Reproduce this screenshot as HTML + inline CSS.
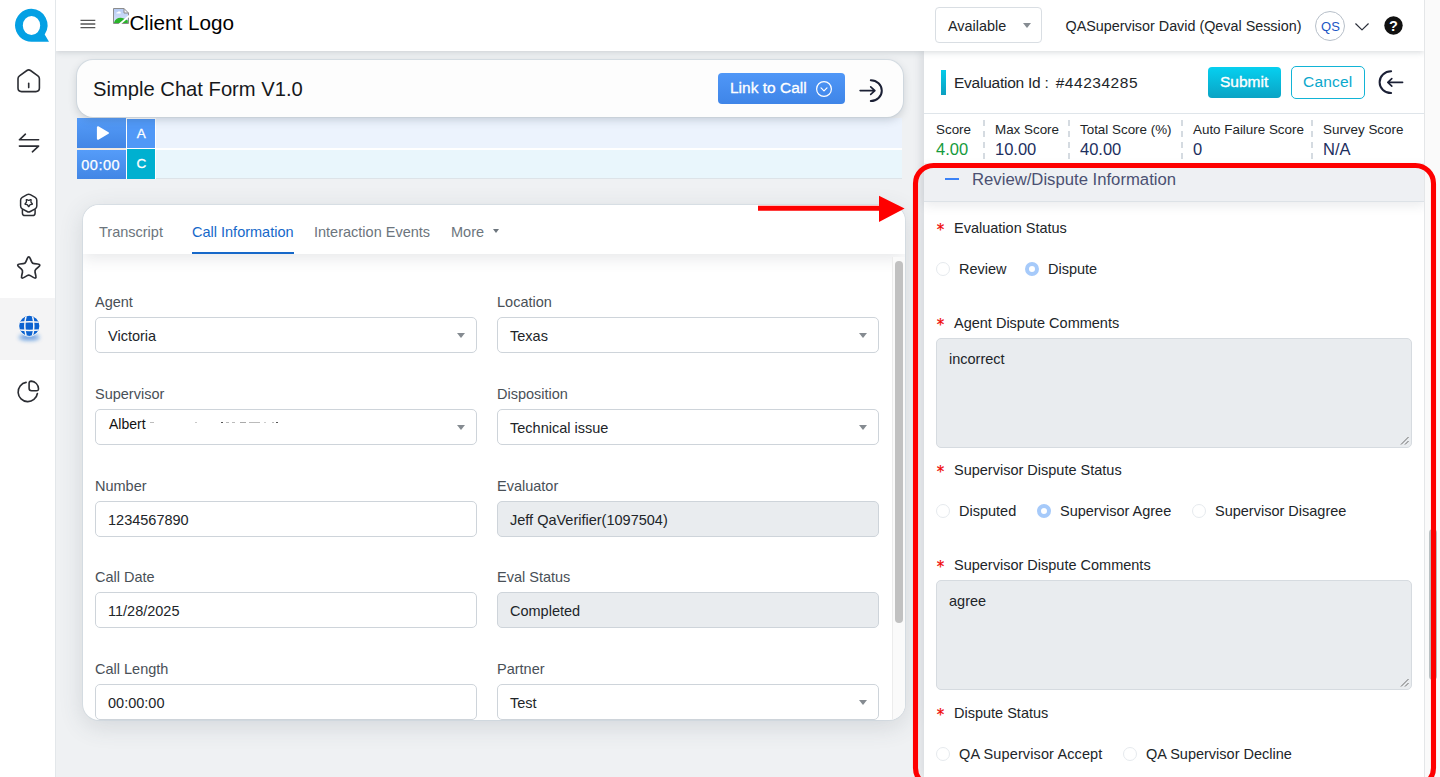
<!DOCTYPE html>
<html lang="en">
<head>
<meta charset="utf-8">
<title>Evaluation</title>
<style>
*{box-sizing:border-box;margin:0;padding:0}
html,body{width:1440px;height:777px;overflow:hidden}
body{position:relative;background:#eff1f3;font-family:"Liberation Sans",Arial,sans-serif;color:#212529;font-size:14.5px}
.abs{position:absolute}
.t{position:absolute;white-space:nowrap;line-height:1}
/* sidebar */
#side{position:absolute;left:0;top:0;width:56px;height:777px;background:#fff;border-right:1px solid #e3e7ea;z-index:5}
#side .act{position:absolute;left:0;top:298px;width:55px;height:62px;background:#f4f4f5}
#side svg{position:absolute}
/* header */
#hdr{position:absolute;left:56px;top:0;width:1368px;height:51px;background:#fff;box-shadow:0 1px 6px rgba(60,72,88,.22);z-index:3}
#gutter{position:absolute;left:1424px;top:0;width:16px;height:777px;background:#fafafa;border-left:1px solid #e4e6e8;z-index:4}
/* left */
#title{position:absolute;left:77px;top:60px;width:826px;height:57px;background:#fdfdfd;border-radius:16px;box-shadow:0 0 0 1px rgba(190,204,216,.45),0 3px 8px rgba(60,72,88,.22)}
#card{position:absolute;left:83px;top:205px;width:822px;height:515px;background:#fff;border-radius:16px;box-shadow:0 0 0 1px rgba(190,204,216,.35),0 6px 24px rgba(60,72,88,.16);overflow:hidden}
.lab{position:absolute;white-space:nowrap;line-height:1;color:#495057;font-size:14.5px}
.inp{position:absolute;width:382px;height:36px;border:1px solid #ced4da;border-radius:5px;background:#fff;font-size:14.5px;line-height:36px;padding-left:12px;color:#212529;white-space:nowrap}
.inp.dis{background:#e9ecef}
.inp.sel:after{content:"";position:absolute;right:11px;top:15px;border-left:4px solid transparent;border-right:4px solid transparent;border-top:5px solid #858b91}
/* right */
#right{position:absolute;left:924px;top:51px;width:500px;height:726px;background:#fff;box-shadow:-3px 0 8px rgba(60,72,88,.13)}
.req{position:absolute;white-space:nowrap;line-height:1;font-size:14.5px;color:#212529}
.req b{position:absolute;left:-18px;top:-1px;color:#e8141c;font-weight:700;font-size:15px}
.rad{position:absolute;width:14px;height:14px;border-radius:50%;border:1px solid #e6eaee;background:#fff}
.rad.on{width:14px;height:14px;border:4px solid #a6cafa;background:#fff}
.rl{position:absolute;white-space:nowrap;line-height:1;font-size:14.5px;color:#212529}
.ta{position:absolute;left:936px;width:476px;height:110px;background:#e9ecef;border:1px solid #d6dbe0;border-radius:5px;font-size:14.5px;padding:13px 12px;line-height:1}
.ta svg{position:absolute;right:2px;bottom:2px}
</style>
</head>
<body>
<!-- SIDEBAR -->
<div id="side">
  <div class="act"></div>
  <svg style="left:0;top:0" width="56" height="420" viewBox="0 0 56 420" fill="none">
    <!-- logo -->
    <path fill="#04a0e4" fill-rule="evenodd" d="M31.5 8.8a16.5 16.5 0 1 0 0 33H49l-4.3-7.3A16.5 16.5 0 0 0 31.5 8.8zM31.5 16a8.7 9.5 0 1 1 0 19a8.7 9.5 0 1 1 0-19z"/>
    <g stroke="#2b2d33" stroke-width="1.600" stroke-linecap="round" stroke-linejoin="round">
      <!-- home -->
      <path d="M26.900 70.500L19.500 75.800Q18 76.900 18 78.800V88Q18 91.600 21.600 91.600H35.800Q39.400 91.600 39.400 88V78.800Q39.400 76.900 37.900 75.800L30.500 70.500Q28.700 69.200 26.900 70.500Z"/>
      <path d="M28.7 83.4v4.2"/>
      <!-- transfer -->
      <path d="M25.4 134.2L19.4 139.8H38.6"/>
      <path d="M32.4 151.8L38.6 146.1H19.4"/>
      <!-- award -->
      <path stroke-width="1.500" d="M27.08 194.60Q28.70 193.70 30.32 194.60L35.18 197.30Q36.80 198.20 36.80 200.14L36.80 205.96Q36.80 207.90 35.18 208.80L30.32 211.50Q28.70 212.40 27.08 211.50L22.22 208.80Q20.60 207.90 20.60 205.96L20.60 200.14Q20.60 198.20 22.22 197.30Z"/>
      <path stroke-width="1.500" d="M22.400 209.700V213Q22.400 215.600 25 215.600H32.500Q35.100 215.600 35.100 213V209.700"/>
      <path stroke-width="1.300" d="M29.04 206.42Q28.70 207.00 28.36 206.42L27.48 204.89Q27.35 204.66 27.08 204.60L25.37 204.24Q24.71 204.10 25.16 203.60L26.33 202.29Q26.51 202.09 26.48 201.82L26.30 200.07Q26.23 199.40 26.85 199.68L28.45 200.39Q28.70 200.50 28.95 200.39L30.55 199.68Q31.17 199.40 31.10 200.07L30.92 201.82Q30.89 202.09 31.07 202.29L32.24 203.60Q32.69 204.10 32.03 204.24L30.32 204.60Q30.05 204.66 29.92 204.89Z"/>
      <!-- star -->
      <path stroke-width="1.700" d="M27.22 258.62Q28.75 255.10 30.28 258.62L31.67 261.81Q32.39 263.48 34.21 263.66L37.67 263.99Q41.49 264.36 38.62 266.90L36.02 269.20Q34.65 270.42 35.04 272.20L35.79 275.59Q36.63 279.34 33.32 277.39L30.33 275.63Q28.75 274.70 27.17 275.63L24.18 277.39Q20.87 279.34 21.71 275.59L22.46 272.20Q22.85 270.42 21.48 269.20L18.88 266.90Q16.01 264.36 19.83 263.99L23.29 263.66Q25.11 263.48 25.83 261.81Z"/>
      <!-- pie -->
      <path d="M26.100 382.400A9.700 9.700 0 1 0 37.400 393.500"/>
      <path d="M29.100 383.300Q29.100 381.100 31.300 381.100A8.200 8.200 0 0 1 38.500 388.600Q38.600 390.800 36.400 390.800H31.600Q29.100 390.800 29.100 388.300Z"/>
    </g>
    <!-- globe -->
    <defs><filter id="bl" x="-50%" y="-300%" width="200%" height="700%"><feGaussianBlur stdDeviation="2"/></filter>
    <clipPath id="gc"><circle cx="29.300" cy="325.900" r="10.100"/></clipPath></defs>
    <ellipse cx="29.200" cy="337.300" rx="10.500" ry="3" fill="#0d63d0" opacity=".6" filter="url(#bl)"/>
    <circle cx="29.300" cy="325.900" r="10.700" fill="#fbfbfb"/>
    <circle cx="29.300" cy="325.900" r="10.100" fill="#0c62d0"/>
    <g clip-path="url(#gc)" stroke="#f6f6f7" stroke-width="1.500" fill="none">
      <path d="M18 322.300Q29.300 321.300 41 322.300M18 329.900Q29.300 330.900 41 329.900"/>
      <ellipse cx="29.300" cy="325.900" rx="4.500" ry="14"/>
    </g>
  </svg>
</div>
<!-- HEADER -->
<div id="hdr">
  <!-- hamburger -->
  <svg class="abs" style="left:24px;top:19px" width="16" height="11" viewBox="0 0 16 11"><path d="M.5 1.300h14.800M.5 5h14.800M.5 8.600h14.800" stroke="#555" stroke-width="1.350"/></svg>
  <!-- broken image -->
  <svg class="abs" style="left:57px;top:8px" width="16" height="16" viewBox="0 0 16 16">
    <defs><linearGradient id="sky" x1="0" y1="0" x2="0" y2="1"><stop offset="0" stop-color="#b4caf3"/><stop offset="1" stop-color="#dbe6fa"/></linearGradient></defs>
    <path d="M.500.500H11L15.500 5V15.500H.500z" fill="url(#sky)"/>
    <path d="M3.300 5.600q-.2-1.300 1.200-1.300q.6-1.300 1.900-.7q1.400-.2 1.300 1.200q.7.800-.4.800z" fill="#fff"/>
    <path d="M1 14.800C2.500 9.500 8.500 8 14.800 12.600V15H1z" fill="#2ab32a"/>
    <path d="M11 .500V5h4.500z" fill="#f4f6fb"/>
    <path d="M.500.500H11L15.500 5V15.500H.500zM11 .500V5h4.500" fill="none" stroke="#8c8c8c" stroke-width="1"/>
    <path d="M6.300 16.500L16.500 7.600" stroke="#fff" stroke-width="1.900"/>
  </svg>
  <span class="t" style="left:73.400px;top:13px;font-size:20.700px;color:#000">Client Logo</span>
  <!-- available -->
  <div class="abs" style="left:879px;top:7px;width:107px;height:36px;border:1px solid #d9dee3;border-radius:4px;background:#fff"></div>
  <span class="t" style="left:892px;top:19px;font-size:14.400px;color:#212529">Available</span>
  <div class="abs" style="left:966.500px;top:23px;border-left:4px solid transparent;border-right:4px solid transparent;border-top:5px solid #868c92"></div>
  <span class="t" style="left:1009.500px;top:19px;font-size:14.350px;color:#212529;">QASupervisor David (Qeval Session)</span>
  <div class="abs" style="left:1259px;top:11px;width:30px;height:30px;border-radius:50%;border:1px solid #b7bfc9;background:#fff"></div>
  <span class="t" style="left:1265px;top:20px;font-size:13px;color:#1a56c4;letter-spacing:.2px">QS</span>
  <svg class="abs" style="left:1298px;top:22px" width="16" height="10" viewBox="0 0 16 10"><path d="M1.700 1.800L8 7.900l6.300-6.100" fill="none" stroke="#2a2e39" stroke-width="1.200" stroke-linecap="round" stroke-linejoin="round"/></svg>
  <svg class="abs" style="left:1327.700px;top:16px" width="19" height="19" viewBox="0 0 19 19"><circle cx="9.500" cy="9.500" r="9.200" fill="#111"/><text x="9.500" y="14.700" text-anchor="middle" font-family="Liberation Sans,Arial,sans-serif" font-weight="700" font-size="14.500" fill="#fff">?</text></svg>
</div>
<div id="gutter"></div>
<!-- LEFT -->
<div id="player">
  <div class="abs" style="left:77px;top:118px;width:825px;height:61px;background:#fff"></div>
  <div class="abs" style="left:156px;top:118px;width:746px;height:30px;background:#ecf3fd"></div>
  <div class="abs" style="left:156px;top:150px;width:746px;height:29px;background:#e9f6fc;border-bottom:1px solid #dde3e8"></div>
  <div class="abs" style="left:77px;top:148px;width:49px;height:2px;background:#f2e9de"></div>
  <div class="abs" style="left:77px;top:118px;width:49px;height:30px;background:linear-gradient(#559cf9,#4286e5)"></div>
  <div class="abs" style="left:77px;top:150px;width:49px;height:29px;background:linear-gradient(#559cf9,#4286e5)"></div>
  <div class="abs" style="left:127px;top:119px;width:28px;height:29px;background:#5098f7"></div>
  <div class="abs" style="left:127px;top:149px;width:28px;height:30px;background:#00b0d0"></div>
  <svg class="abs" style="left:96px;top:125px" width="14" height="16" viewBox="0 0 14 16"><path d="M1.900 2.200v11.600L12 8z" fill="#fff" stroke="#fff" stroke-width="2" stroke-linejoin="round"/></svg>
  <span class="t" style="left:81.300px;top:157.500px;font-size:14.500px;letter-spacing:.5px;color:#fff;-webkit-text-stroke:.25px #fff">00:00</span>
  <span class="t" style="left:136.700px;top:126.500px;font-size:13.500px;color:#fff;-webkit-text-stroke:.3px #fff">A</span>
  <span class="t" style="left:136.500px;top:157px;font-size:13.500px;color:#fff;-webkit-text-stroke:.3px #fff">C</span>
</div>
<div id="title">
  <span class="t" style="left:16px;top:19px;font-size:20.200px;color:#16181b">Simple Chat Form V1.0</span>
  <div class="abs" style="left:641px;top:13px;width:127px;height:31px;border-radius:4px;background:linear-gradient(#4f97f7,#3f85e8)"></div>
  <span class="t" style="left:653px;top:19.500px;font-size:15.500px;color:#fff;-webkit-text-stroke:.3px #fff">Link to Call</span>
  <svg class="abs" style="left:738px;top:20px" width="18" height="18" viewBox="0 0 18 18" fill="none" stroke="#fff" stroke-width="1.200" stroke-linecap="round" stroke-linejoin="round"><circle cx="9" cy="9" r="7.400"/><path d="M6 7.800l3 3l3-3"/></svg>
  <svg class="abs" style="left:781px;top:18px" width="26" height="26" viewBox="0 0 26 26" fill="none" stroke="#1b2035" stroke-linecap="round" stroke-linejoin="round"><path stroke-width="1.600" d="M2.100 12.600H16.900M12.700 8.800L16.900 12.600L12.700 16.400"/><path stroke-width="2" d="M12.800 2.200A11 10.450 0 0 1 12.800 23.100"/></svg>
</div>
<div id="card">
  <div class="abs" style="left:0;top:0;width:822px;height:49px;background:#fff;box-shadow:0 4px 16px rgba(60,72,88,.13)"></div>
  <span class="t" style="left:16px;top:20px;font-size:14.500px;color:#6c757d">Transcript</span>
  <span class="t" style="left:109px;top:20px;font-size:14.500px;color:#1668c9">Call Information</span>
  <div class="abs" style="left:109px;top:47px;width:102px;height:2px;background:#1668c9"></div>
  <span class="t" style="left:231px;top:20px;font-size:14.500px;color:#6c757d">Interaction Events</span>
  <span class="t" style="left:368px;top:20px;font-size:14.500px;color:#6c757d">More</span>
  <div class="abs" style="left:409.500px;top:24px;border-left:3.750px solid transparent;border-right:3.750px solid transparent;border-top:4px solid #6c757d"></div>
  <span class="lab" style="left:12px;top:90px">Agent</span>
  <div class="inp sel" style="left:12px;top:112px">Victoria</div>
  <span class="lab" style="left:414px;top:90px">Location</span>
  <div class="inp sel" style="left:414px;top:112px">Texas</div>
  <span class="lab" style="left:12px;top:182px">Supervisor</span>
  <div class="inp sel" style="left:12px;top:204px"><span style="position:absolute;left:13px;top:-4px;font-size:14px;color:#111">Albert</span><i style="position:absolute;left:54px;top:12px;width:4px;height:1px;background:#bdbdbd"></i><i style="position:absolute;left:99px;top:12px;width:2px;height:1px;background:#c8c8c8"></i><i style="position:absolute;left:125px;top:12px;width:2px;height:1px;background:#555"></i><i style="position:absolute;left:130px;top:12px;width:3px;height:1px;background:#bbb"></i><i style="position:absolute;left:136px;top:12px;width:3px;height:1px;background:#bbb"></i><i style="position:absolute;left:144px;top:12px;width:6px;height:1px;background:#aaa"></i><i style="position:absolute;left:153px;top:12px;width:11px;height:1px;background:#bbb"></i><i style="position:absolute;left:168px;top:12px;width:2px;height:1px;background:#ccc"></i><i style="position:absolute;left:176px;top:12px;width:2px;height:1px;background:#bbb"></i><i style="position:absolute;left:180px;top:12px;width:2px;height:1px;background:#555"></i></div>
  <span class="lab" style="left:414px;top:182px">Disposition</span>
  <div class="inp sel" style="left:414px;top:204px">Technical issue</div>
  <span class="lab" style="left:12px;top:274px">Number</span>
  <div class="inp " style="left:12px;top:296px">1234567890</div>
  <span class="lab" style="left:414px;top:274px">Evaluator</span>
  <div class="inp dis" style="left:414px;top:296px">Jeff QaVerifier(1097504)</div>
  <span class="lab" style="left:12px;top:365px">Call Date</span>
  <div class="inp " style="left:12px;top:387px">11/28/2025</div>
  <span class="lab" style="left:414px;top:365px">Eval Status</span>
  <div class="inp dis" style="left:414px;top:387px">Completed</div>
  <span class="lab" style="left:12px;top:457px">Call Length</span>
  <div class="inp " style="left:12px;top:479px">00:00:00</div>
  <span class="lab" style="left:414px;top:457px">Partner</span>
  <div class="inp sel" style="left:414px;top:479px">Test</div>
  <div class="abs" style="left:809px;top:52px;width:14px;height:470px;background:#fafafa;border-left:1px solid #ececec"></div>
  <div class="abs" style="left:812px;top:56px;width:8px;height:362px;border-radius:4px;background:#c1c1c1"></div>
</div>
<!-- RIGHT -->
<div id="right"></div>
<div id="rp">
  <div class="abs" style="left:941px;top:70px;width:5px;height:25px;background:linear-gradient(#05cbe9,#0b9fc0)"></div>
  <span class="t" style="left:954px;top:75.200px;font-size:15.500px;color:#212529;letter-spacing:-.25px">Evaluation Id :</span>
  <span class="t" style="left:1055.700px;top:75.200px;font-size:15.500px;color:#212529;letter-spacing:.53px">#44234285</span>
  <div class="abs" style="left:1208px;top:67px;width:73px;height:31px;border-radius:4px;background:linear-gradient(#06d0f0,#0aa3c4)"></div>
  <span class="t" style="left:1220px;top:73.8px;font-size:15.5px;color:#fff;-webkit-text-stroke:.35px #fff">Submit</span>
  <div class="abs" style="left:1291px;top:66px;width:74px;height:33px;border-radius:5px;border:1px solid #12b4d6;background:#fff"></div>
  <span class="t" style="left:1303px;top:73.5px;font-size:15.5px;color:#0aa8cc;letter-spacing:.2px">Cancel</span>
  <svg class="abs" style="left:1377px;top:70px" width="28" height="28" viewBox="0 0 28 28" fill="none" stroke="#1b2035" stroke-linecap="round" stroke-linejoin="round"><path stroke-width="1.600" d="M25.600 12.400H10.800M14.800 8.600L10.800 12.400L14.800 16.200"/><path stroke-width="2" d="M14.100 1.300A11.500 10.900 0 0 0 14.100 23.100"/></svg>
  <div class="abs" style="left:924px;top:113px;width:501px;height:1px;background:#dfe5ea"></div>
  <span class="t" style="left:936px;top:122.9px;font-size:13.400px;color:#212529;">Score</span>
  <span class="t" style="left:936px;top:141.2px;font-size:16.5px;color:#159a3c;">4.00</span>
  <span class="t" style="left:995px;top:122.9px;font-size:13.400px;color:#212529;">Max Score</span>
  <span class="t" style="left:995px;top:141.2px;font-size:16.5px;color:#1c2f5e;">10.00</span>
  <span class="t" style="left:1080px;top:122.9px;font-size:13.400px;color:#212529;">Total Score (%)</span>
  <span class="t" style="left:1080px;top:141.2px;font-size:16.5px;color:#1c2f5e;">40.00</span>
  <span class="t" style="left:1193px;top:122.9px;font-size:13.400px;color:#212529;">Auto Failure Score</span>
  <span class="t" style="left:1193px;top:141.2px;font-size:16.5px;color:#1c2f5e;">0</span>
  <span class="t" style="left:1323px;top:122.9px;font-size:13.400px;color:#212529;">Survey Score</span>
  <span class="t" style="left:1323px;top:141.2px;font-size:16.5px;color:#1c2f5e;">N/A</span>
  <div class="abs" style="left:983px;top:120px;width:0;height:39px;border-left:2px dashed #d5dbe1"></div>
  <div class="abs" style="left:1068px;top:120px;width:0;height:39px;border-left:2px dashed #d5dbe1"></div>
  <div class="abs" style="left:1181px;top:120px;width:0;height:39px;border-left:2px dashed #d5dbe1"></div>
  <div class="abs" style="left:1311px;top:120px;width:0;height:39px;border-left:2px dashed #d5dbe1"></div>
  <div class="abs" style="left:924px;top:163px;width:501px;height:39px;background:#eef0f3;border-bottom:1px solid #dde2e7;box-shadow:0 4px 10px rgba(60,72,88,.10)"></div>
  <div class="abs" style="left:945px;top:178px;width:14px;height:2px;background:#3b82f6"></div>
  <span class="t" style="left:972px;top:172.400px;font-size:16.700px;color:#4b5072;">Review/Dispute Information</span>
  <span class="t" style="left:936.700px;top:223.2px;font-family:'DejaVu Sans',sans-serif;font-size:15px;color:#f00808;-webkit-text-stroke:.25px #f00808">*</span>
  <span class="t" style="left:954px;top:221.2px;font-size:14.5px;color:#212529;">Evaluation Status</span>
  <div class="rad" style="left:936px;top:262px"></div>
  <span class="t" style="left:959px;top:262.2px;font-size:14.5px;color:#212529;">Review</span>
  <div class="rad on" style="left:1025px;top:262px"></div>
  <span class="t" style="left:1048px;top:262.2px;font-size:14.5px;color:#212529;">Dispute</span>
  <span class="t" style="left:936.700px;top:318.2px;font-family:'DejaVu Sans',sans-serif;font-size:15px;color:#f00808;-webkit-text-stroke:.25px #f00808">*</span>
  <span class="t" style="left:954px;top:316.2px;font-size:14.5px;color:#212529;">Agent Dispute Comments</span>
  <div class="ta" style="top:338px">incorrect<svg width="9" height="9" viewBox="0 0 9 9"><path d="M8.500 1L1 8.500M8.500 5L5 8.500" stroke="#6a6a6a" stroke-width="1"/></svg></div>
  <span class="t" style="left:936.700px;top:465.2px;font-family:'DejaVu Sans',sans-serif;font-size:15px;color:#f00808;-webkit-text-stroke:.25px #f00808">*</span>
  <span class="t" style="left:954px;top:463.2px;font-size:14.5px;color:#212529;">Supervisor Dispute Status</span>
  <div class="rad" style="left:936px;top:504px"></div>
  <span class="t" style="left:959px;top:504.2px;font-size:14.5px;color:#212529;">Disputed</span>
  <div class="rad on" style="left:1037px;top:504px"></div>
  <span class="t" style="left:1060px;top:504.2px;font-size:14.5px;color:#212529;">Supervisor Agree</span>
  <div class="rad" style="left:1192px;top:504px"></div>
  <span class="t" style="left:1215px;top:504.2px;font-size:14.5px;color:#212529;">Supervisor Disagree</span>
  <span class="t" style="left:936.700px;top:560.2px;font-family:'DejaVu Sans',sans-serif;font-size:15px;color:#f00808;-webkit-text-stroke:.25px #f00808">*</span>
  <span class="t" style="left:954px;top:558.2px;font-size:14.5px;color:#212529;">Supervisor Dispute Comments</span>
  <div class="ta" style="top:580px">agree<svg width="9" height="9" viewBox="0 0 9 9"><path d="M8.500 1L1 8.500M8.500 5L5 8.500" stroke="#6a6a6a" stroke-width="1"/></svg></div>
  <span class="t" style="left:936.700px;top:708.2px;font-family:'DejaVu Sans',sans-serif;font-size:15px;color:#f00808;-webkit-text-stroke:.25px #f00808">*</span>
  <span class="t" style="left:954px;top:706.2px;font-size:14.5px;color:#212529;">Dispute Status</span>
  <div class="rad" style="left:936px;top:747px"></div>
  <span class="t" style="left:959px;top:747.2px;font-size:14.5px;color:#212529;letter-spacing:.12px">QA Supervisor Accept</span>
  <div class="rad" style="left:1123px;top:747px"></div>
  <span class="t" style="left:1146px;top:747.2px;font-size:14.5px;color:#212529;">QA Supervisor Decline</span>
  <div class="abs" style="left:1429px;top:528.500px;width:8px;height:151px;border-radius:4px;background:#b9c1c3;z-index:6"></div>
  <svg class="abs" style="left:0;top:0;z-index:7" width="1440" height="777" viewBox="0 0 1440 777"><rect x="915.500" y="165.500" width="518" height="620.500" rx="18" ry="18" fill="none" stroke="#fe0000" stroke-width="5.100"/><path d="M758 205.700H879V195.800L904.600 208.600L879 222V210.700H758z" fill="#fe0000"/></svg>
</div>
</body>
</html>
